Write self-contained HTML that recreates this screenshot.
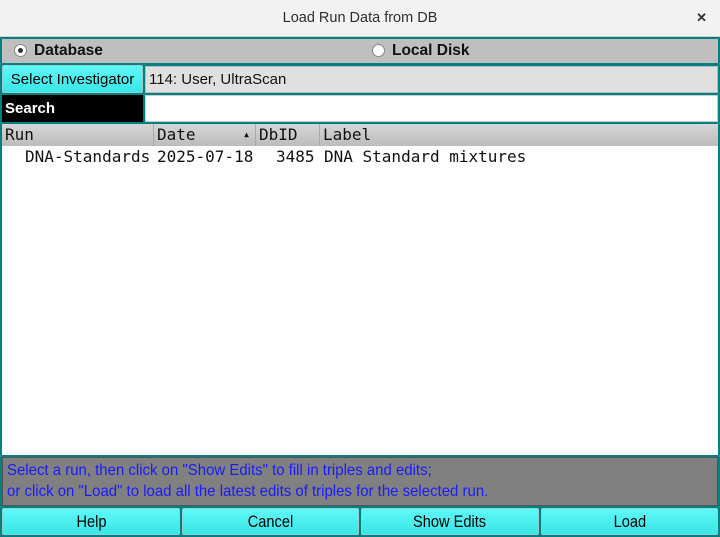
<!DOCTYPE html>
<html><head><style>
*{margin:0;padding:0;box-sizing:border-box}
body{width:720px;height:537px;background:#008080;font-family:"Liberation Sans",sans-serif;position:relative;overflow:hidden}
.a{position:absolute}
.title{left:0;top:0;width:720px;height:37px;background:#f2f2f2;border-bottom:1px solid #d0d0d0;text-align:center;line-height:36px;font-size:14.5px;color:#2e2e2e}
.btn{background:linear-gradient(#5ff8f8,#3ae6e6);border:1px solid #9cc;border-radius:2px;text-align:center;font-size:17px;line-height:26px;color:#000}
.btn span{display:inline-block;transform:scaleX(0.86)}
.mono{font-family:"DejaVu Sans Mono","Liberation Mono",monospace;font-size:16px}
.hd{top:124px;height:22px;line-height:22px;background:linear-gradient(#d6d6d6,#bcbcbc);border-right:1px solid #aaa;padding-left:3px;color:#111}
</style></head><body>
<div class="a title">Load Run Data from DB<span class="a" style="right:13px;top:0;font-size:13px;font-weight:bold;color:#333">✕</span></div>
<div class="a" style="left:2px;top:39px;width:716px;height:24px;background:#bfbfbf"></div>
<div class="a" style="left:14px;top:44px;width:13px;height:13px;border-radius:50%;background:#fff;border:1px solid #888"><div class="a" style="left:3px;top:3px;width:5px;height:5px;border-radius:50%;background:#333"></div></div>
<div class="a" style="left:34px;top:42px;font-weight:bold;font-size:15.5px;color:#111">Database</div>
<div class="a" style="left:372px;top:44px;width:13px;height:13px;border-radius:50%;background:#fff;border:1px solid #888"></div>
<div class="a" style="left:392px;top:42px;font-weight:bold;font-size:15.5px;color:#111">Local Disk</div>
<div class="a btn" style="left:2px;top:65px;width:141px;height:28px;font-size:15px;line-height:27px">Select Investigator</div>
<div class="a" style="left:145px;top:66px;width:573px;height:27px;background:#e0e0e0;border:1px solid #bbb;padding-left:3px;line-height:25px;font-size:15px;color:#111">114: User, UltraScan</div>
<div class="a" style="left:2px;top:95px;width:141px;height:27px;background:#000;color:#fff;font-weight:bold;font-size:15px;line-height:27px;padding-left:3px">Search</div>
<div class="a" style="left:145px;top:95px;width:573px;height:27px;background:#fff;border:1px solid #ccc"></div>
<div class="a" style="left:2px;top:124px;width:716px;height:331px;background:#fff"></div>
<div class="a hd mono" style="left:2px;width:152px">Run</div>
<div class="a hd mono" style="left:154px;width:102px">Date<span class="a" style="right:6px;top:0;font-size:8px">▲</span></div>
<div class="a hd mono" style="left:256px;width:64px">DbID</div>
<div class="a hd mono" style="left:320px;width:398px;border-right:none">Label</div>
<div class="a mono" style="left:25px;top:147px;color:#111">DNA-Standards</div>
<div class="a mono" style="left:157px;top:147px;color:#111">2025-07-18</div>
<div class="a mono" style="left:276px;top:147px;color:#111">3485</div>
<div class="a mono" style="left:324px;top:147px;color:#111">DNA Standard mixtures</div>
<div class="a" style="left:2px;top:457px;width:716px;height:49px;background:#808080;border:1px solid #555"></div>
<div class="a" style="left:7px;top:460px;white-space:nowrap;transform:scaleX(0.935);transform-origin:left;font-size:16px;line-height:21px;color:#1a1aff">Select a run, then click on "Show Edits" to fill in triples and edits;<br>or click on "Load" to load all the latest edits of triples for the selected run.</div>
<div class="a btn" style="left:2px;top:508px;width:178px;height:27px"><span>Help</span></div>
<div class="a btn" style="left:182px;top:508px;width:177px;height:27px"><span>Cancel</span></div>
<div class="a btn" style="left:361px;top:508px;width:178px;height:27px"><span>Show Edits</span></div>
<div class="a btn" style="left:541px;top:508px;width:177px;height:27px"><span>Load</span></div>
</body></html>
